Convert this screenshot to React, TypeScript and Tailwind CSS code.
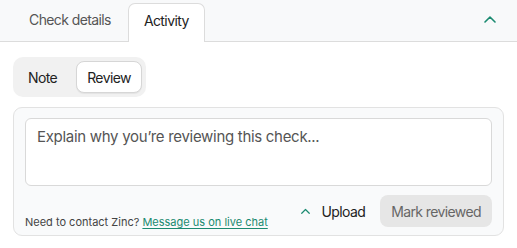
import React from "react";

function ChevronUp({ className }: { className?: string }) {
  return (
    <svg className={className} viewBox="0 0 12 8" fill="none" stroke="currentColor" strokeWidth={1.6} strokeLinecap="round" strokeLinejoin="round">
      <path d="M1 7 L6 2 L11 7" />
    </svg>
  );
}

export default function App() {
  return (
    <div className="w-[517px] h-[248px] bg-white text-[#222] overflow-hidden" style={{ fontFamily: "Inter, 'Noto Sans', sans-serif" }}>
      <div className="h-[42px] bg-[#f8f9fa] border-b border-[#dcdcdc] flex items-end pl-[13px] pr-[21px]">
        <div className="h-[39px] px-4 pt-[7px] leading-[20px] text-[14px] tracking-[-0.6px] text-[#555] -mb-px">Check details</div>
        <div className="ml-[1px] h-[39px] px-[15px] pt-[7px] leading-[20px] text-[14px] tracking-[-0.6px] text-[#222] bg-white border border-b-0 border-[#dcdcdc] rounded-t-[7px] -mb-px relative">Activity</div>
        <div className="flex-1" />
        <div className="h-[41px] pt-[15px]">
          <ChevronUp className="w-[12px] h-[8px] text-[#1a8a70]" />
        </div>
      </div>
      <div className="px-[13px] pt-[15px]">
        <div className="inline-flex items-center gap-[8px] bg-[#f1f1f1] rounded-[10px] p-1">
          <div className="h-[32px] px-[11px] flex items-center text-[14px] tracking-[-0.6px] text-[#222]">Note</div>
          <div className="h-[32px] px-[10px] flex items-center text-[14px] tracking-[-0.6px] text-[#222] bg-white rounded-[8px] border border-[#d6d6d6] shadow-[0_1px_1px_rgba(0,0,0,0.06)]">Review</div>
        </div>
        <div className="mt-[10px] border border-[#e2e2e2] rounded-[9px] bg-[#f9fafb] px-[11px] pt-[10px] pb-[8px]">
          <div className="h-[68px] bg-white border border-[#d9d9d9] rounded-[6px] px-[11px] pt-[7px] text-[15px] leading-[22px] tracking-[-0.3px] text-[#555]">
            Explain why you’re reviewing this check...
          </div>
          <div className="mt-[9px] flex items-end">
            <div className="text-[11px] leading-[14px] text-[#444] -mb-[2px]">
              Need to contact Zinc?{" "}
              <span className="text-[#1a8a70] underline underline-offset-2">Message us on live chat</span>
            </div>
            <div className="flex-1" />
            <div className="h-[32px] flex items-center gap-[11px] mr-[15px]">
              <ChevronUp className="w-[9px] h-[6px] text-[#1a8a70]" />
              <span className="text-[14px] tracking-[-0.6px] text-[#222]">Upload</span>
            </div>
            <div className="h-[32px] px-[11px] flex items-center rounded-[8px] bg-[#e6e6e6] text-[14px] tracking-[-0.6px] text-[#666]">Mark reviewed</div>
          </div>
        </div>
      </div>
    </div>
  );
}
